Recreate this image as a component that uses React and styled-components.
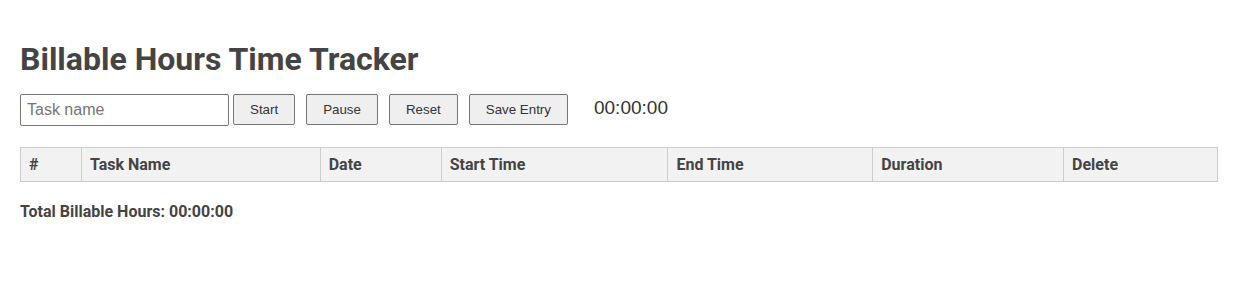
import React, { useState, useEffect, useRef } from "react";
import styled, { createGlobalStyle } from "styled-components";

const GlobalStyle = createGlobalStyle`
  body {
    margin: 0;
    padding: 20px;
    background: #fff;
    font-family: Roboto, "Liberation Sans", Arial, sans-serif;
    color: #444;
  }
`;

const pad = (n) => String(n).padStart(2, "0");
const fmt = (secs) =>
  `${pad(Math.floor(secs / 3600))}:${pad(Math.floor((secs % 3600) / 60))}:${pad(secs % 60)}`;

const columns = [
  { label: "#", width: 61 },
  { label: "Task Name", width: 239 },
  { label: "Date", width: 121 },
  { label: "Start Time", width: 227 },
  { label: "End Time", width: 205 },
  { label: "Duration", width: 191 },
  { label: "Delete", width: 154 },
];

const App = () => {
  const [task, setTask] = useState("");
  const [seconds, setSeconds] = useState(0);
  const [running, setRunning] = useState(false);
  const [entries, setEntries] = useState([]);
  const timer = useRef(null);

  useEffect(() => {
    if (running) {
      timer.current = setInterval(() => setSeconds((s) => s + 1), 1000);
    }
    return () => clearInterval(timer.current);
  }, [running]);

  const total = entries.reduce((sum, e) => sum + e.duration, 0);

  return (
    <>
      <GlobalStyle />
      <Title>Billable Hours Time Tracker</Title>
      <Controls>
        <TaskInput
          placeholder="Task name"
          value={task}
          onChange={(e) => setTask(e.target.value)}
        />
        <Button $first onClick={() => setRunning(true)}>Start</Button>
        <Button onClick={() => setRunning(false)}>Pause</Button>
        <Button
          onClick={() => {
            setRunning(false);
            setSeconds(0);
          }}
        >
          Reset
        </Button>
        <Button
          onClick={() => {
            if (!seconds) return;
            const now = new Date();
            setEntries([
              ...entries,
              {
                name: task,
                date: now.toLocaleDateString(),
                start: new Date(now - seconds * 1000).toLocaleTimeString(),
                end: now.toLocaleTimeString(),
                duration: seconds,
              },
            ]);
            setRunning(false);
            setSeconds(0);
            setTask("");
          }}
        >
          Save Entry
        </Button>
        <Timer>{fmt(seconds)}</Timer>
      </Controls>
      <Table>
        <thead>
          <tr>
            {columns.map((c) => (
              <Th key={c.label} style={{ width: c.width }}>
                {c.label}
              </Th>
            ))}
          </tr>
        </thead>
        <tbody>
          {entries.map((e, i) => (
            <tr key={i}>
              <Td>{i + 1}</Td>
              <Td>{e.name}</Td>
              <Td>{e.date}</Td>
              <Td>{e.start}</Td>
              <Td>{e.end}</Td>
              <Td>{fmt(e.duration)}</Td>
              <Td>
                <Button
                  $first
                  onClick={() => setEntries(entries.filter((_, j) => j !== i))}
                >
                  Delete
                </Button>
              </Td>
            </tr>
          ))}
        </tbody>
      </Table>
      <Total>Total Billable Hours: {fmt(total)}</Total>
    </>
  );
};

export default App;

const Title = styled.h1`
  font-size: 32px;
  font-weight: 700;
  color: #444;
  margin: 21px 0 16px;
  line-height: 1.15;
`;

const Controls = styled.div`
  display: flex;
  align-items: center;
  margin-bottom: 21px;
`;

const TaskInput = styled.input`
  box-sizing: border-box;
  width: 209px;
  height: 32px;
  padding: 4px 6px;
  font-family: "Liberation Sans", Arial, sans-serif;
  font-size: 16px;
  color: #333;
  border: 1px solid #767676;
  border-radius: 2px;
  outline: none;

  &::placeholder {
    color: #757575;
  }
`;

const Button = styled.button`
  box-sizing: border-box;
  height: 31px;
  margin-left: ${(p) => (p.$first ? "4px" : "11px")};
  padding: 0 16px;
  font-family: "Liberation Sans", Arial, sans-serif;
  font-size: 13.333px;
  color: #333;
  background: #efefef;
  border: 1px solid #767676;
  border-radius: 2px;
  cursor: pointer;
`;

const Timer = styled.span`
  margin-left: 26px;
  margin-top: -4px;
  font-family: "Liberation Sans", Arial, sans-serif;
  font-size: 19px;
  color: #333;
`;

const Table = styled.table`
  width: 100%;
  border-collapse: collapse;
`;

const Th = styled.th`
  box-sizing: border-box;
  background: #f2f2f2;
  border: 1px solid #ccc;
  padding: 8px;
  text-align: left;
  font-size: 16px;
  line-height: 17px;
  font-weight: 700;
  color: #444;
`;

const Td = styled.td`
  border: 1px solid #ccc;
  padding: 8px;
  font-size: 16px;
`;

const Total = styled.p`
  font-size: 16px;
  font-weight: 700;
  color: #444;
  margin: 20px 0 0;
`;
